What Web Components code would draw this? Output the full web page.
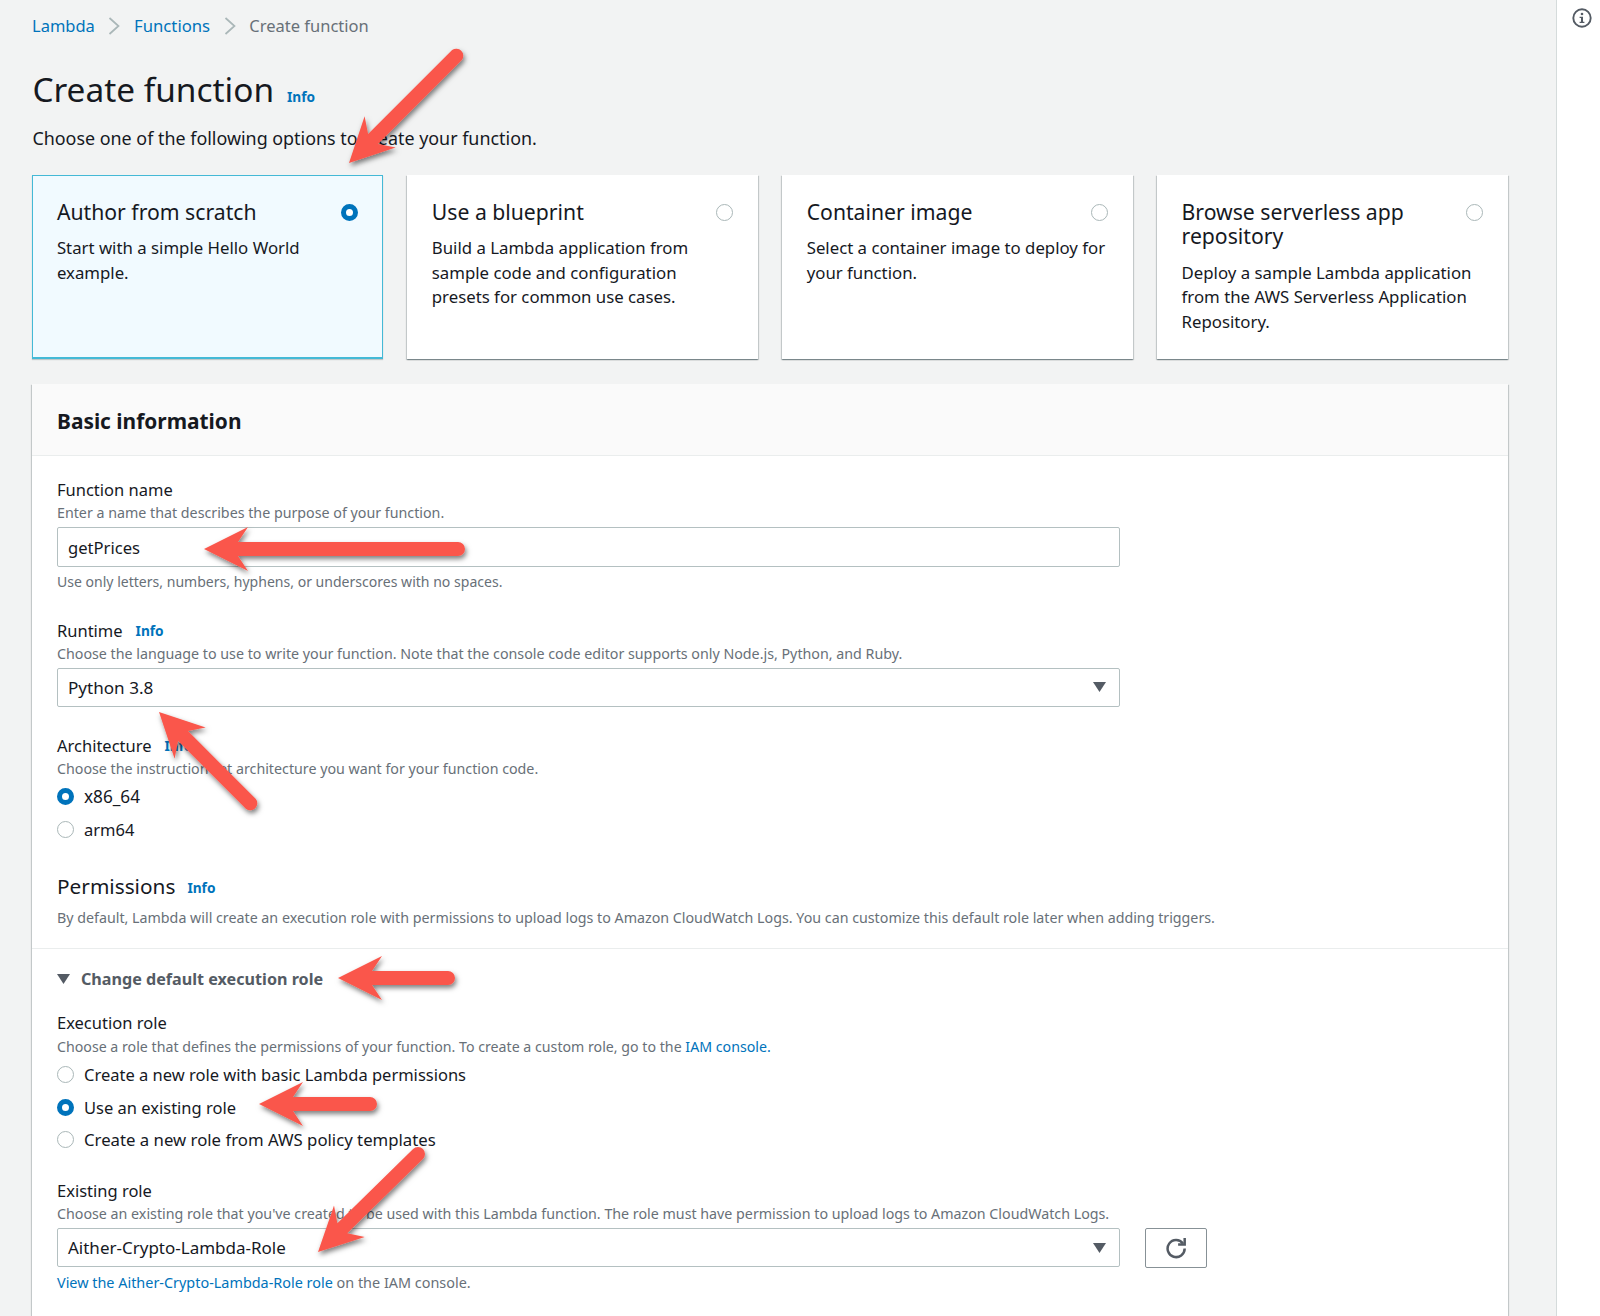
<!doctype html>
<html lang="en"><head><meta charset="utf-8"><title>Create function</title>
<style>
html,body{margin:0;padding:0;background:#f2f3f3;overflow:hidden}
body{font-family:"Noto Sans",sans-serif;color:#16191f}
</style></head>
<body>
<aws-app>
  <aws-breadcrumbs></aws-breadcrumbs>
  <aws-title>Create function</aws-title>
  <aws-intro>Choose one of the following options to create your function.</aws-intro>
  <aws-cards>
    <aws-card heading="Author from scratch" checked>Start with a simple Hello World example.</aws-card>
    <aws-card heading="Use a blueprint">Build a Lambda application from sample code and configuration presets for common use cases.</aws-card>
    <aws-card heading="Container image">Select a container image to deploy for your function.</aws-card>
    <aws-card heading="Browse serverless app repository">Deploy a sample Lambda application from the AWS Serverless Application Repository.</aws-card>
  </aws-cards>
  <aws-panel heading="Basic information">
    <aws-section slot="top">
      <aws-field style="--gap:0px" label="Function name" desc="Enter a name that describes the purpose of your function.">
        <aws-input value="getPrices" style="padding-top:1px"></aws-input>
        <aws-help slot="hint" style="font-size:14.05px">Use only letters, numbers, hyphens, or underscores with no spaces.</aws-help>
      </aws-field>
      <aws-field style="--gap:28px" label="Runtime" info desc="Choose the language to use to write your function. Note that the console code editor supports only Node.js, Python, and Ruby.">
        <aws-input value="Python 3.8" select style="height:39px;font-size:17.1px"></aws-input>
      </aws-field>
      <aws-field style="--gap:28px" label="Architecture" info desc="Choose the instruction set architecture you want for your function code.">
        <aws-radio checked style="margin-top:-2px;font-size:17.2px">x86_64</aws-radio>
        <aws-radio>arm64</aws-radio>
      </aws-field>
      <aws-subhead>Permissions</aws-subhead>
      <aws-help style="margin-top:8px">By default, Lambda will create an execution role with permissions to upload logs to Amazon CloudWatch Logs. You can customize this default role later when adding triggers.</aws-help>
    </aws-section>
    <aws-section slot="bottom">
      <aws-expander>Change default execution role</aws-expander>
      <aws-field style="--gap:22px" label="Execution role">
        <aws-help slot="desc" style="margin-top:3px;font-size:14.2px">Choose a role that defines the permissions of your function. To create a custom role, go to the <aws-link>IAM console</aws-link><span style="color:#0073bb">.</span></aws-help>
        <aws-radio style="margin-top:-2px">Create a new role with basic Lambda permissions</aws-radio>
        <aws-radio checked>Use an existing role</aws-radio>
        <aws-radio style="font-size:16.75px">Create a new role from AWS policy templates</aws-radio>
      </aws-field>
      <aws-field style="--gap:24px" label="Existing role" desc="Choose an existing role that you've created to be used with this Lambda function. The role must have permission to upload logs to Amazon CloudWatch Logs.">
        <aws-input-row>
          <aws-input value="Aither-Crypto-Lambda-Role" select style="height:39px;font-size:17px"></aws-input>
          <aws-refresh></aws-refresh>
        </aws-input-row>
        <aws-help slot="hint" style="font-size:14.42px;margin-top:2px"><aws-link>View the Aither-Crypto-Lambda-Role role</aws-link> on the IAM console.</aws-help>
      </aws-field>
    </aws-section>
  </aws-panel>
</aws-app>
<script>
function def(name, css, html, init){
  customElements.define(name, class extends HTMLElement{
    constructor(){super();const r=this.attachShadow({mode:'open'});
      r.innerHTML='<style>'+css+'</style>'+(typeof html==='function'?html(this):html);}
    connectedCallback(){ if(init&&!this._i){this._i=1;init.call(this,this.shadowRoot);} }
  });
}
const esc=s=>String(s||'').replace(/&/g,'&amp;').replace(/</g,'&lt;');

def('aws-link',':host{color:#0073bb}','<slot></slot>');
def('aws-info',':host{display:inline-block;color:#0073bb;font-size:13.7px;font-weight:700;line-height:20px}','Info');

def('aws-app',`
  :host{display:flex;width:1600px;height:1316px;position:relative;overflow:hidden;background:#f2f3f3}
  main{flex:1;min-width:0;display:flex;flex-direction:column;padding:0 47.9px 0 32.4px}
  aside{background:#fff;border-left:1px solid #d5dbdb;padding:8px 0 0 15px;box-sizing:border-box;width:44px}
  aside svg{display:block;width:20px;height:20px}
  svg.over{position:absolute;left:0;top:0;width:1600px;height:1316px;pointer-events:none;overflow:visible}
`,`<main><slot></slot></main>
<aside><svg viewBox="0 0 20 20"><circle cx="10" cy="10" r="8.7" fill="none" stroke="#545b64" stroke-width="1.9"/><circle cx="10" cy="6" r="1.3" fill="#545b64"/><path d="M7.6 8.7h3.4v5.1h1.4v1.3H7.6v-1.3H9V10H7.6z" fill="#545b64"/></svg></aside>
<svg class="over" viewBox="0 0 1600 1316" id="over"></svg>`,
function(r){
  const A=[[[457,55],[349,163]],[[458,549],[204,549]],[[251,804],[159,712]],[[448,978],[338,978]],[[370,1104],[259,1104]],[[418,1154],[318,1252]]];
  const L=44,N=34,W=22,S=7;
  let out='<defs><filter id="sh" x="-20%" y="-20%" width="140%" height="140%"><feDropShadow dx="1.5" dy="3" stdDeviation="2.5" flood-color="#000" flood-opacity=".5"/></filter></defs>';
  for(const [t,p] of A){
    const dx=t[0]-p[0],dy=t[1]-p[1],l=Math.hypot(dx,dy),ux=dx/l,uy=dy/l,nx=-uy,ny=ux;
    const P=(a,b)=>(p[0]+ux*a+nx*b).toFixed(1)+' '+(p[1]+uy*a+ny*b).toFixed(1);
    out+=`<path filter="url(#sh)" fill="#fa574b" d="M${P(0,0)}L${P(L,W)}L${P(N,S)}L${P(l,S)}A${S} ${S} 0 0 0 ${P(l,-S)}L${P(N,-S)}L${P(L,-W)}Z"/>`;
  }
  r.getElementById('over').innerHTML=out;
});

def('aws-breadcrumbs',`
  :host{display:flex;align-items:center;height:51px;font-size:16.5px;flex:none;gap:13.6px;margin-left:-.4px}
  a{color:#0073bb} a.f{font-size:16.7px} span{color:#687078}
  svg{width:12px;height:18px;display:block}
`,()=>{const c='<svg viewBox="0 0 12 18"><path d="M1.5 1l9 8-9 8" fill="none" stroke="#aab7b8" stroke-width="1.7"/></svg>';
  return `<a>Lambda</a>${c}<a class="f">Functions</a>${c}<span>Create function</span>`});

def('aws-title',`
  :host{display:flex;align-items:baseline;gap:13px;flex:none;margin-top:16px;height:44px;line-height:44px;font-size:33.4px;color:#16191f}
`,'<slot></slot><aws-info></aws-info>');

def('aws-intro',':host{display:block;flex:none;font-size:17.9px;line-height:26px;margin-top:13.5px;color:#16191f}','<slot></slot>');

def('aws-cards',':host{display:grid;grid-template-columns:repeat(4,350.9px);column-gap:24px;flex:none;margin-top:24px;height:184px}','<slot></slot>');

def('aws-radio-dot',`
  :host{display:block;flex:none;width:17px;height:17px;box-sizing:border-box;border-radius:50%;background:#fff;border:1.5px solid #aab7b8}
  :host([checked]){border:5px solid #0073bb}
`,'');

def('aws-card',`
  :host{display:flex;flex-direction:column;box-sizing:border-box;padding:25px 24px 0 24.5px;background:#fff;
    box-shadow:0 1px 1px 0 rgba(0,28,36,.3),1px 1px 1px 0 rgba(0,28,36,.15),-1px 1px 1px 0 rgba(0,28,36,.15)}
  :host([checked]){background:#f1faff;border:1px solid #44b9d6;border-bottom-width:2px;padding:24px 23px 0 23.5px;box-shadow:0 1px 1px 0 rgba(0,28,36,.2)}
  .h{display:flex;justify-content:space-between;gap:24px}
  h3{margin:0;font:400 21.2px/24.5px "Noto Sans",sans-serif;color:#16191f}
  aws-radio-dot{margin:4.5px 1px 0 0}
  p{margin:12px 0 0;font-size:16.8px;line-height:24.5px;color:#16191f}
`,e=>`<div class="h"><h3>${esc(e.getAttribute('heading'))}</h3><aws-radio-dot ${e.hasAttribute('checked')?'checked':''}></aws-radio-dot></div><p><slot></slot></p>`);

def('aws-panel',`
  :host{display:flex;flex-direction:column;flex:1;margin:25px 0 0 0;background:#fff;
    box-shadow:0 1px 1px 0 rgba(0,28,36,.3),1px 1px 1px 0 rgba(0,28,36,.15),-1px 1px 1px 0 rgba(0,28,36,.15)}
  header{height:72px;box-sizing:border-box;background:#fafafa;border-bottom:1px solid #eaeded;padding:3px 24.6px 0;display:flex;align-items:center}
  h2{margin:0;font:700 20.9px/28px "Noto Sans",sans-serif;color:#16191f}
  .top{padding:23px 24.6px 20px;border-bottom:1px solid #eaeded}
  .bottom{padding:19px 24.6px 0}
`,e=>`<header><h2>${esc(e.getAttribute('heading'))}</h2></header><div class="top"><slot name="top"></slot></div><div class="bottom"><slot name="bottom"></slot></div>`);

def('aws-section',':host{display:block}','<slot></slot>');

def('aws-field',`
  :host{display:block;margin-top:var(--gap,0)}
  .l{display:flex;align-items:center;gap:13px;font-size:16.5px;line-height:22px;color:#16191f}
  .d{display:block;font-size:14.25px;line-height:20px;color:#687078;margin:2px 0 4px}
  .c{display:block;margin-top:5px}
  .hide{display:none}
`,e=>{
  const d=e.getAttribute('desc');
  return `<div class="l">${esc(e.getAttribute('label'))}${e.hasAttribute('info')?'<aws-info></aws-info>':''}</div>
  <div class="d"><slot name="desc">${esc(d)}</slot></div><slot></slot>
  <div class="c ${e.querySelector('[slot=hint]')?'':'hide'}"><slot name="hint"></slot></div>`;
});

def('aws-help',':host{display:block;font-size:14.25px;line-height:20px;color:#687078}','<slot></slot>');

def('aws-subhead',':host{display:flex;align-items:center;gap:12px;margin-top:26px;font-size:20.8px;line-height:28px;color:#16191f} .i{margin-top:4px}','<slot></slot><aws-info class="i"></aws-info>');

def('aws-input',`
  :host{display:flex;align-items:center;width:1063px;height:40px;box-sizing:border-box;border:1px solid #b4c0c1;border-radius:2px;background:#fff;padding:0 13px 0 10px;font-size:16.6px}
  .w{flex:1;display:flex;align-items:center;justify-content:space-between;color:#16191f}
  svg{width:13px;height:10px;display:block}
`,e=>`<div class="w"><span>${esc(e.getAttribute('value'))}</span>${e.hasAttribute('select')?'<svg viewBox="0 0 13 10"><path d="M0 0h13L6.5 10z" fill="#545b64"/></svg>':''}</div>`);

def('aws-input-row',':host{display:flex;gap:25px;align-items:flex-start}','<slot></slot>');

def('aws-refresh',`
  :host{display:flex;align-items:center;justify-content:center;width:62px;height:40px;box-sizing:border-box;border:1px solid #879196;border-radius:2px;background:#fff}
  svg{width:21px;height:21px;display:block}
`,'<svg viewBox="0 0 16 16" fill="none" stroke="#545b64" stroke-width="1.9"><path d="M10 5h5V0"/><path d="M15 8a6.5 6.5 0 1 1-1.33-3.9"/></svg>');

def('aws-radio',`
  :host{display:flex;align-items:center;gap:10px;height:32.5px;font-size:16.5px;color:#16191f}
`,e=>`<aws-radio-dot ${e.hasAttribute('checked')?'checked':''}></aws-radio-dot><span><slot></slot></span>`);

def('aws-expander',`
  :host{display:flex;align-items:center;gap:11px;font-size:16.15px;font-weight:700;line-height:22px;color:#545b64}
  svg{width:13px;height:10px;display:block}
`,'<svg viewBox="0 0 13 10"><path d="M0 0h13L6.5 10z" fill="#545b64"/></svg><span><slot></slot></span>');
</script>
</body></html>
